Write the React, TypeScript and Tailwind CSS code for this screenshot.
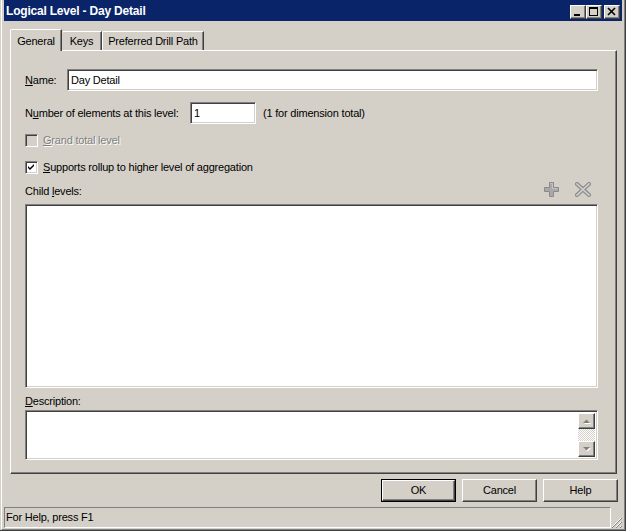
import React from "react";

const face = "bg-[#d4d0c8]";
const sunken =
  "border border-t-[#808080] border-l-[#808080] border-b-white border-r-white shadow-[inset_1px_1px_0_#404040,inset_-1px_-1px_0_#d4d0c8]";
const raised =
  "border border-t-white border-l-white border-b-[#404040] border-r-[#404040] shadow-[inset_-1px_-1px_0_#808080]";

function CaptionButton(props: { kind: "min" | "max" | "close" }) {
  return (
    <div className={`w-[16px] h-[14px] ${face} ${raised} flex items-center justify-center`}>
      <svg width="14" height="12" viewBox="0 0 14 12">
        {props.kind === "min" && <rect x="3" y="8" width="6" height="2" fill="#000" />}
        {props.kind === "max" && (
          <g fill="none" stroke="#000">
            <rect x="2.5" y="1.5" width="8" height="8" />
            <line x1="2" y1="2.5" x2="11" y2="2.5" />
          </g>
        )}
        {props.kind === "close" && (
          <g stroke="#000" strokeWidth="1.6">
            <line x1="3" y1="2" x2="10" y2="9" />
            <line x1="10" y1="2" x2="3" y2="9" />
          </g>
        )}
      </svg>
    </div>
  );
}

function Checkbox(props: { checked?: boolean; disabled?: boolean }) {
  return (
    <div
      className={`w-[13px] h-[13px] ${sunken} ${props.disabled ? "bg-[#d4d0c8]" : "bg-white"} flex items-center justify-center`}
    >
      {props.checked && (
        <svg width="7" height="7" viewBox="0 0 7 7">
          <path d="M0 2 L2 4 L6 0 L6 2 L2 6 L0 4 Z" fill="#000" />
        </svg>
      )}
    </div>
  );
}

function ScrollArrow(props: { up?: boolean }) {
  return (
    <div className={`w-[17px] h-[16px] ${face} ${raised} flex items-center justify-center`}>
      <svg width="9" height="6" viewBox="0 0 9 6">
        {props.up ? (
          <>
            <path d="M1 5 L4.5 1.5 L8 5 Z" fill="#ffffff" transform="translate(1 1)" />
            <path d="M1 5 L4.5 1.5 L8 5 Z" fill="#808080" />
          </>
        ) : (
          <>
            <path d="M1 1 L8 1 L4.5 4.5 Z" fill="#ffffff" transform="translate(1 1)" />
            <path d="M1 1 L8 1 L4.5 4.5 Z" fill="#808080" />
          </>
        )}
      </svg>
    </div>
  );
}

function Button(props: { label: string; isDefault?: boolean }) {
  if (props.isDefault) {
    return (
      <div className="w-[75px] h-[23px] border border-black flex">
        <div className={`flex-1 ${face} ${raised} flex items-center justify-center`}>{props.label}</div>
      </div>
    );
  }
  return (
    <div className={`w-[75px] h-[23px] ${face} ${raised} flex items-center justify-center`}>{props.label}</div>
  );
}

export default function App() {
  return (
    <div
      className={`w-[626px] h-[531px] ${face} flex flex-col pl-[1px] border-r border-b border-[#404040] text-[11px] leading-[13px] tracking-[-0.2px] text-black`}
      style={{ fontFamily: '"Liberation Sans", Arial, sans-serif' }}
    >
      <div className="flex-1 flex flex-col border-l border-l-white border-r border-b border-r-[#808080] border-b-[#808080] pl-[2px] pr-[2px] pb-[1px]">
        {/* title bar */}
        <div className="h-[21px] bg-[#0a246a] flex items-start justify-between">
          <div className="pl-[2px] pt-[4px] font-bold text-white text-[12px] leading-[14px] tracking-[-0.2px]">
            Logical Level - Day Detail
          </div>
          <div className="flex mt-[5px] mr-[2px]">
            <CaptionButton kind="min" />
            <CaptionButton kind="max" />
            <div className="w-[2px]" />
            <CaptionButton kind="close" />
          </div>
        </div>

        <div className="flex-1 flex flex-col ml-[6px] mr-[5px]">
          {/* tabs */}
          <div className="mt-[8px] h-[21px] flex items-end">
            <div
              className={`relative z-10 -mb-[1px] h-[22px] w-[52px] ${face} border-l border-t border-white border-r border-r-[#404040] shadow-[inset_-1px_0_0_#808080] rounded-tl-[2px] flex items-start justify-center pt-[5px]`}
            >
              General
            </div>
            <div className="h-[19px] w-[40px] border-t border-white border-r border-r-[#404040] shadow-[inset_-1px_0_0_#808080] rounded-tl-[2px] flex items-start justify-center pt-[3px]">
              Keys
            </div>
            <div className="h-[19px] w-[102px] border-l border-t border-white border-r border-r-[#404040] shadow-[inset_-1px_0_0_#808080] rounded-tl-[2px] flex items-start justify-center pt-[3px]">
              Preferred Drill Path
            </div>
          </div>

          {/* panel */}
          <div className="flex-1 flex flex-col border border-t-white border-l-white border-b-[#404040] border-r-[#404040] shadow-[inset_-1px_-1px_0_#808080] pl-[14px] pr-[18px] pb-[13px]">
            <div className="mt-[18px] flex items-center">
              <div className="w-[42px]">
                <u>N</u>ame:
              </div>
              <div className={`flex-1 h-[22px] bg-white ${sunken} flex items-center pl-[3px]`}>Day Detail</div>
            </div>

            <div className="mt-[11px] flex items-center">
              <div className="w-[165px]">
                N<u>u</u>mber of elements at this level:
              </div>
              <div className={`w-[66px] h-[22px] bg-white ${sunken} flex items-center pl-[3px]`}>1</div>
              <div className="ml-[7px]">(1 for dimension total)</div>
            </div>

            <div className="mt-[10px] flex items-center gap-[5px]">
              <Checkbox disabled />
              <div className="text-[#808080] [text-shadow:1px_1px_0_#ffffff]">
                <u>G</u>rand total level
              </div>
            </div>

            <div className="mt-[14px] flex items-center gap-[5px]">
              <Checkbox checked />
              <div>
                <u>S</u>upports rollup to higher level of aggregation
              </div>
            </div>

            <div className="mt-[6px] flex items-center justify-between">
              <div className="mt-[5px]">
                Child <u>l</u>evels:
              </div>
              <div className="flex items-center gap-[16px] mr-[7px]">
                <svg width="15" height="15" viewBox="0 0 15 15">
                  <path
                    d="M5.5 0.5 H9.5 V5.5 H14.5 V9.5 H9.5 V14.5 H5.5 V9.5 H0.5 V5.5 H5.5 Z"
                    fill="#a9a9a9"
                    stroke="#8a8a8a"
                  />
                  <path d="M6.5 1.5 H8.5 V6.5 H13.5" fill="none" stroke="#c4c4c4" />
                </svg>
                <svg width="16" height="15" viewBox="0 0 16 15">
                  <g strokeLinecap="square">
                    <line x1="2" y1="2" x2="14" y2="13" stroke="#8c8c8c" strokeWidth="4" />
                    <line x1="14" y1="2" x2="2" y2="13" stroke="#8c8c8c" strokeWidth="4" />
                    <line x1="2" y1="2" x2="14" y2="13" stroke="#cfcfcf" strokeWidth="1.6" />
                    <line x1="14" y1="2" x2="2" y2="13" stroke="#cfcfcf" strokeWidth="1.6" />
                  </g>
                </svg>
              </div>
            </div>

            <div className={`mt-[6px] h-[184px] bg-white ${sunken}`} />

            <div className="mt-[7px]">
              <u>D</u>escription:
            </div>

            <div className={`mt-[2px] flex-1 bg-white ${sunken} flex justify-end p-[2px]`}>
              <div className="w-[17px] flex flex-col">
                <ScrollArrow up />
                <div className="flex-1 bg-[repeating-conic-gradient(#d4d0c8_0_25%,#ffffff_0_50%)] bg-[length:2px_2px]" />
                <ScrollArrow />
              </div>
            </div>
          </div>
        </div>

        {/* buttons */}
        <div className="mt-[5px] flex justify-end gap-[6px] mr-[4px]">
          <Button label="OK" isDefault />
          <Button label="Cancel" />
          <Button label="Help" />
        </div>

        {/* status bar */}
        <div className="mt-[5px] h-[21px] flex items-stretch">
          <div className="flex-1 border border-t-[#808080] border-l-[#808080] border-b-white border-r-white flex items-center pl-[1px]">
            For Help, press F1
          </div>
          <div className="w-[11px] flex items-end justify-end">
            <svg width="11" height="11" viewBox="0 0 11 11">
              <g strokeWidth="1">
                <line x1="10" y1="1" x2="1" y2="10" stroke="#ffffff" />
                <line x1="11" y1="1" x2="1" y2="11" stroke="#808080" />
                <line x1="10" y1="5" x2="5" y2="10" stroke="#ffffff" />
                <line x1="11" y1="5" x2="5" y2="11" stroke="#808080" />
                <line x1="10" y1="9" x2="9" y2="10" stroke="#ffffff" />
                <line x1="11" y1="9" x2="9" y2="11" stroke="#808080" />
              </g>
            </svg>
          </div>
        </div>
      </div>
    </div>
  );
}
